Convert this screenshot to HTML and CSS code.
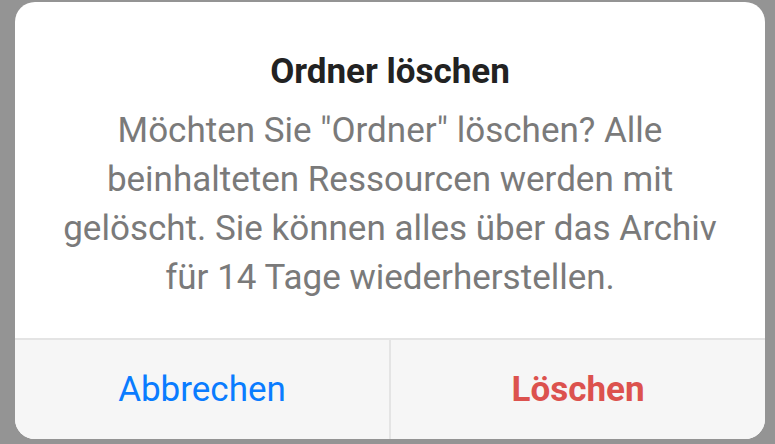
FILE: index.html
```html
<!DOCTYPE html>
<html lang="de">
<head>
    <meta charset="UTF-8">
    <meta name="viewport" content="width=device-width, initial-scale=1.0">
    <title>Ordner löschen</title>
    <link rel="stylesheet" href="styles.css">
</head>
<body>
    <div class="dialog">
        <div class="dialog-content">
            <h2 class="dialog-title">Ordner löschen</h2>
            <p class="dialog-text">Möchten Sie "Ordner" löschen? Alle beinhalteten Ressourcen werden mit gelöscht. Sie können alles über das Archiv für 14 Tage wiederherstellen.</p>
        </div>
        <div class="dialog-actions">
            <button class="btn cancel">Abbrechen</button>
            <button class="btn delete">Löschen</button>
        </div>
    </div>
</body>
</html>
```

FILE: styles.css
```css
body {
    margin: 0;
    background-color: #949494;
    font-family: Roboto, "Liberation Sans", sans-serif;
}
.dialog {
    width: 750px;
    height: 437px;
    margin: 2px 0 0 15px;
    background-color: #fff;
    border-radius: 20px;
    overflow: hidden;
    display: flex;
    flex-direction: column;
}
.dialog-content {
    flex: 1;
    padding: 50px 40px 0;
    text-align: center;
}
.dialog-title {
    margin: 0;
    font-size: 35px;
    line-height: 40px;
    font-weight: 700;
    color: #222;
}
.dialog-text {
    margin: 14px 0 0;
    font-size: 35px;
    line-height: 49px;
    color: #7a7a7a;
}
.dialog-actions {
    display: flex;
    height: 99px;
    border-top: 2px solid #e4e4e4;
    background-color: #f6f6f6;
}
.btn {
    flex: 1;
    border: none;
    background: transparent;
    font-family: inherit;
    font-size: 35px;
    cursor: pointer;
}
.btn + .btn {
    border-left: 2px solid #e4e4e4;
}
.cancel {
    color: #0a7cff;
}
.delete {
    color: #dc524e;
    font-weight: 700;
}
```
